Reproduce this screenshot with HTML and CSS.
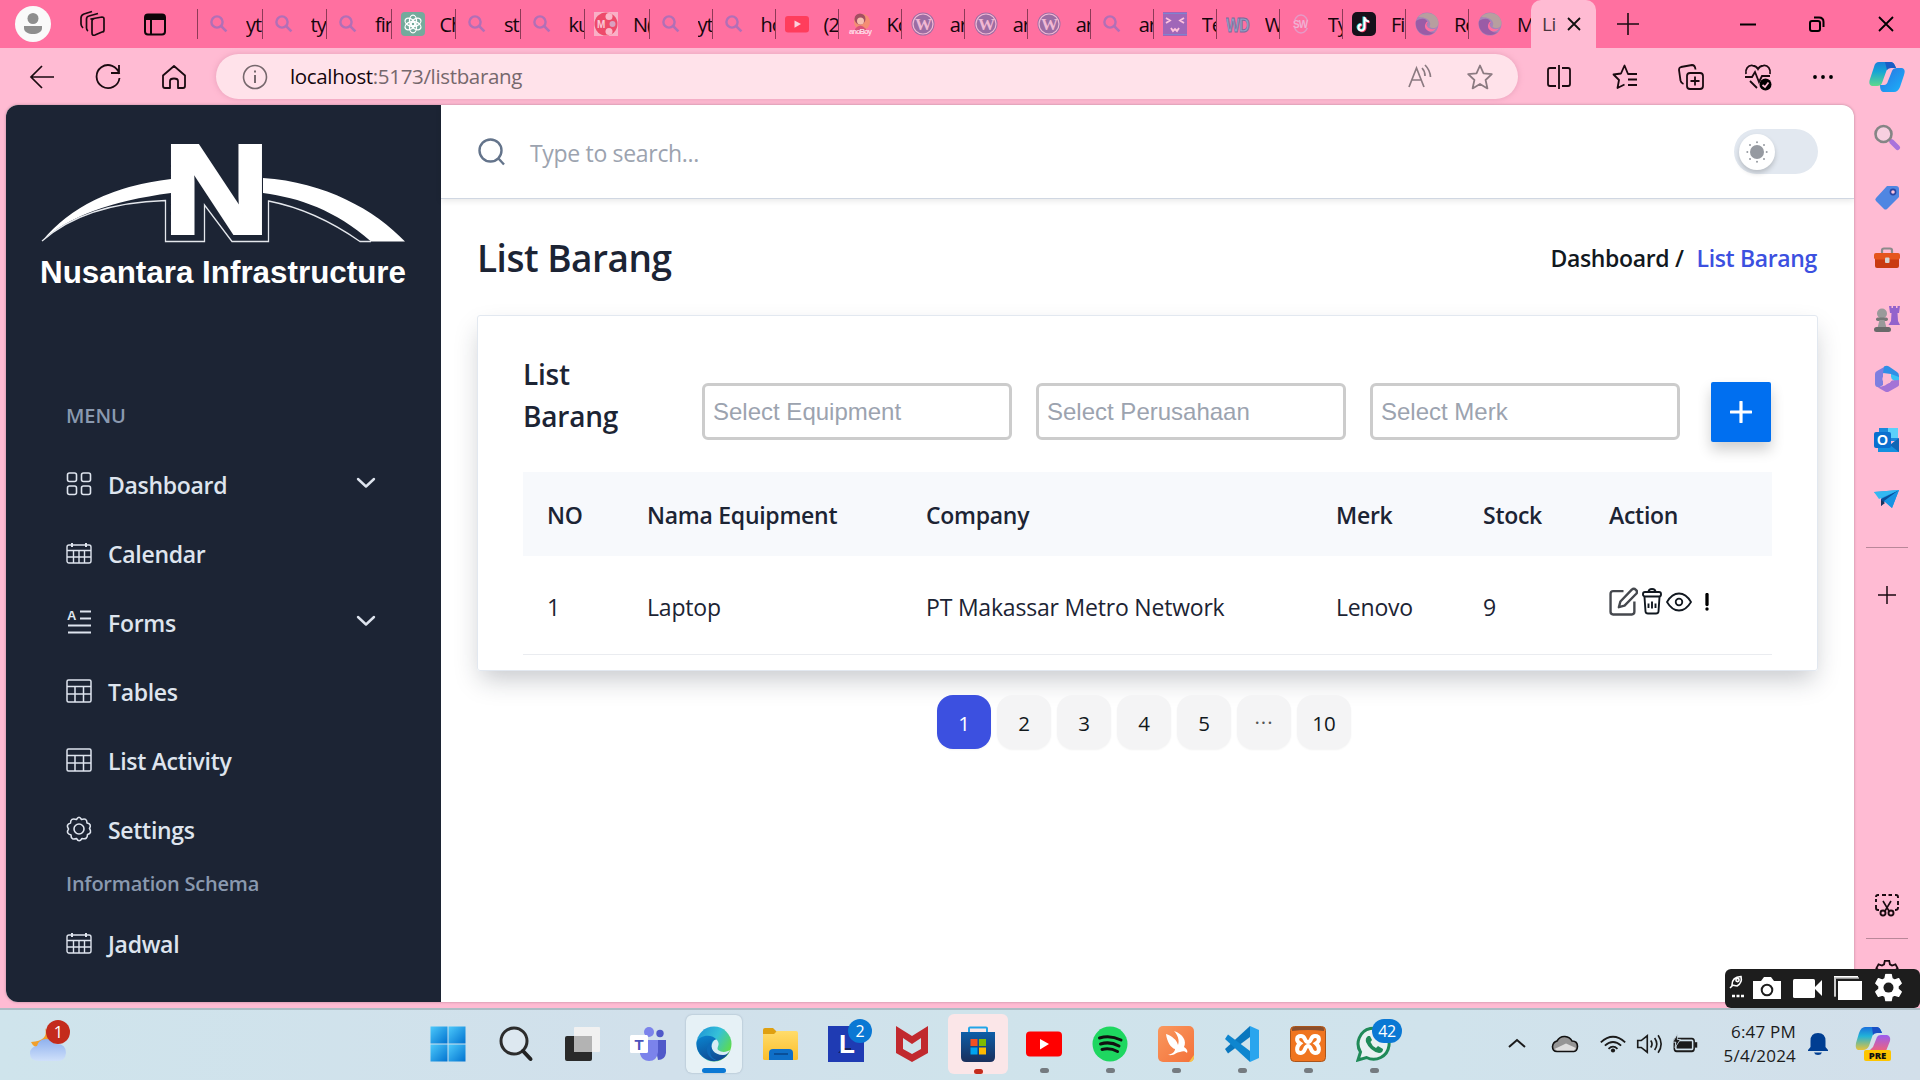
FILE: index.html
```html
<!DOCTYPE html>
<html lang="en">
<head>
<meta charset="utf-8">
<title>List Barang</title>
<link rel="stylesheet" href="styles.css">
</head>
<body>
<svg class="defs" width="0" height="0">
  <defs>
    <linearGradient id="gEdge" x1="0" y1="0" x2="1" y2="0.6"><stop offset="0" stop-color="#1b8fd6"/><stop offset=".55" stop-color="#35c1d8"/><stop offset="1" stop-color="#5fdc4a"/></linearGradient>
    <linearGradient id="gEdge2" x1="0" y1="0" x2="0.4" y2="1"><stop offset="0" stop-color="#0a85d0"/><stop offset="1" stop-color="#0f4d96"/></linearGradient>
    <linearGradient id="gWin" x1="0" y1="0" x2="1" y2="1"><stop offset="0" stop-color="#4cc9fb"/><stop offset="1" stop-color="#0273d0"/></linearGradient>
    <linearGradient id="gCopA" x1="0" y1="0" x2="0" y2="1"><stop offset="0" stop-color="#1b7fd8"/><stop offset=".4" stop-color="#15a5d5"/><stop offset="1" stop-color="#5fd98c"/></linearGradient>
    <linearGradient id="gCopB" x1="0" y1="0" x2="1" y2="1"><stop offset="0" stop-color="#2b6fe0"/><stop offset="1" stop-color="#19b5fb"/></linearGradient>
    <linearGradient id="gCopC" x1="0" y1="0" x2="0" y2="1"><stop offset="0" stop-color="#1a70dd"/><stop offset=".4" stop-color="#21b3d8"/><stop offset="1" stop-color="#e8c33a"/></linearGradient>
    <linearGradient id="gCopD" x1="0" y1="0" x2="0" y2="1"><stop offset="0" stop-color="#9a5cf0"/><stop offset="1" stop-color="#f0627a"/></linearGradient>
    <linearGradient id="gCloud" x1="0" y1="0" x2="0" y2="1"><stop offset="0" stop-color="#8fb1ee"/><stop offset="1" stop-color="#cfe0fa"/></linearGradient>
    <linearGradient id="gFolder" x1="0" y1="0" x2="0" y2="1"><stop offset="0" stop-color="#ffdc6b"/><stop offset="1" stop-color="#fbbe2b"/></linearGradient>
    <linearGradient id="gStore" x1="0" y1="0" x2="0" y2="1"><stop offset="0" stop-color="#0d5ea8"/><stop offset="1" stop-color="#1a2f5c"/></linearGradient>
    <linearGradient id="gSwift" x1="0" y1="0" x2="1" y2="1"><stop offset="0" stop-color="#f9985e"/><stop offset="1" stop-color="#f4713a"/></linearGradient>
    <symbol id="glass" viewBox="0 0 24 24"><circle cx="10" cy="10" r="5.600" fill="none" stroke="#b26fb6" stroke-width="2.400"/><path d="M14.200 14.200 19.400 19.400" stroke="#b26fb6" stroke-width="2.600"/></symbol>
    <symbol id="wp" viewBox="0 0 24 24"><circle cx="12" cy="12" r="11.500" fill="#9c6da3"/><circle cx="12" cy="12" r="10" fill="none" stroke="#f1b8d3" stroke-width="1.200"/><text x="12" y="18" text-anchor="middle" font-family="Liberation Serif" font-weight="700" font-size="17" fill="#f1b8d3">W</text></symbol>
    <symbol id="edgefade" viewBox="0 0 24 24"><circle cx="12" cy="12" r="11.500" fill="#a783b8"/><path d="M3 5C9-2 23 0 23.500 11 23 17 17 17 14.500 14.500 17 10 13 5 3 5Z" fill="#b79f9f"/><path d="M1 9C8 4 14 8 12 12 10 19 17 22 20 20 12 27-1 21 1 9Z" fill="#9a5ca6"/><path d="M13 10C9 14 15 19 21 16.500 17 22 9 19 10 13 11 10 12 9 13 10Z" fill="#ff70a0"/></symbol>
    <symbol id="edge" viewBox="0 0 36 36"><circle cx="18" cy="18" r="17.500" fill="url(#gEdge)"/><path d="M.6 16C3 9 16 7 21 14 17 13 15 17 16 21 18 28 27 29 33 26 28 36 15 38 7 31 2 27 0 22 .6 16Z" fill="url(#gEdge2)"/><path d="M15 16C11 18 9 24 13 30 16 34 20 35 23 34.800 12 32 14 25 15 16Z" fill="#0d6ab8"/><path d="M21 14C25 19 20 21 22 24 26 27 31 26 34 24 33 27 30 29 27 29 18 29 13 22 17 16 18 14 20 13 21 14Z" fill="#d8ecf5"/></symbol>
    <symbol id="cal" viewBox="0 0 26 24"><g fill="none" stroke="#dee4ee" stroke-width="1.400"><rect x="1" y="4" width="24" height="18" rx="2"/><path d="M1 9.500H25M1 16H25M7.500 9.500V22M13 9.500V22M18.500 9.500V22"/><path d="M6 2V6M20 2V6" stroke-width="2"/></g></symbol>
    <symbol id="tbl" viewBox="0 0 26 24"><g fill="none" stroke="#dee4ee" stroke-width="1.500"><rect x="1" y="1" width="24" height="22" rx="1.500"/><path d="M1 7.500H25M1 15H25M9 7.500V23M17.500 7.500V23"/></g></symbol>
    <symbol id="chev" viewBox="0 0 20 12"><path d="M2 2 10 9.500 18 2" fill="none" stroke="#dee4ee" stroke-width="2.400" stroke-linecap="round" stroke-linejoin="round"/></symbol>
    <symbol id="cog" viewBox="0 0 32 32"><path d="M13.300 1h5.400l.9 4.300 2.600 1.500 4.200-1.400 2.700 4.700-3.300 2.900v3l3.300 2.900-2.700 4.700-4.200-1.400-2.600 1.500-.9 4.300h-5.400l-.9-4.300-2.600-1.500-4.200 1.400-2.700-4.700 3.300-2.900v-3l-3.300-2.900 2.700-4.700 4.200 1.400 2.600-1.500z"/></symbol>
  </defs>
</svg>

<header class="tabbar">
  <div class="tab-tools">
    <svg width="38" height="38" viewBox="0 0 38 38"><circle cx="19" cy="19" r="18" fill="#fafafa"/><circle cx="19" cy="13.500" r="5.500" fill="#8e8e8e"/><path d="M10 21H28V23C28 31 10 31 10 23Z" fill="#8e8e8e"/></svg>
    <svg width="28" height="28" viewBox="0 0 28 28" fill="none" stroke="#1a0a10" stroke-width="1.700" stroke-linejoin="round"><path d="M12 9 23 7Q25 7 25 9V20Q25 22 23 22L16 25Q13 26 13 23V11Q13 9 15 8.600Z"/><path d="M9 21Q7.500 20 7.500 18V9Q7.500 6.500 10 6L19 3.500M4 18Q2 16 2 14V8Q2 5 5 4L13 1.500"/></svg>
    <svg width="24" height="24" viewBox="0 0 24 24"><rect x="2" y="2.500" width="20" height="20" rx="3" fill="none" stroke="#0d0508" stroke-width="2"/><path d="M2 8V5Q2 2 5 2H19Q22 2 22 5V8Z" fill="#0d0508"/><path d="M8 8V22" stroke="#0d0508" stroke-width="2"/></svg>
  </div>
  <div class="tabs">
    <div class="tab"><svg class="fav"><use href="#glass"/></svg><span>yt</span></div>
    <div class="tab"><svg class="fav"><use href="#glass"/></svg><span>ty</span></div>
    <div class="tab"><svg class="fav"><use href="#glass"/></svg><span>fir</span></div>
    <div class="tab"><svg class="fav" viewBox="0 0 24 24"><rect width="24" height="24" rx="4" fill="#74aa9c"/><g fill="none" stroke="#fff" stroke-width="1.300"><ellipse cx="12" cy="8.600" rx="3.500" ry="5.400"/><ellipse cx="12" cy="8.600" rx="3.500" ry="5.400" transform="rotate(60 12 12)"/><ellipse cx="12" cy="8.600" rx="3.500" ry="5.400" transform="rotate(120 12 12)"/><ellipse cx="12" cy="8.600" rx="3.500" ry="5.400" transform="rotate(180 12 12)"/><ellipse cx="12" cy="8.600" rx="3.500" ry="5.400" transform="rotate(240 12 12)"/><ellipse cx="12" cy="8.600" rx="3.500" ry="5.400" transform="rotate(300 12 12)"/></g></svg><span>Ch</span></div>
    <div class="tab"><svg class="fav"><use href="#glass"/></svg><span>st</span></div>
    <div class="tab"><svg class="fav"><use href="#glass"/></svg><span>ku</span></div>
    <div class="tab"><svg class="fav" viewBox="0 0 24 24"><rect width="24" height="24" fill="#f9b0c6"/><circle cx="12" cy="12" r="11.500" fill="#ee4a6a"/><circle cx="15" cy="4.500" r="3.500" fill="#fbb7c9"/><circle cx="15" cy="19.500" r="3.500" fill="#fbb7c9"/><circle cx="18.500" cy="12" r="3" fill="#d9a0c0"/><text x="3" y="16" font-family="Liberation Sans" font-weight="700" font-size="10" fill="#fbc9d6">M</text></svg><span>N(</span></div>
    <div class="tab"><svg class="fav"><use href="#glass"/></svg><span>yt</span></div>
    <div class="tab"><svg class="fav"><use href="#glass"/></svg><span>ho</span></div>
    <div class="tab"><svg class="fav" viewBox="0 0 24 24"><rect y="4" width="24" height="16.500" rx="3" fill="#ff3d5c"/><path d="M9.500 8.500 16 12 9.500 15.700Z" fill="#fbd0dc"/></svg><span>(2</span></div>
    <div class="tab"><svg class="fav" viewBox="0 0 24 24"><circle cx="14" cy="10" r="8" fill="#f58e72"/><circle cx="12" cy="7" r="5.500" fill="#a34f62"/><circle cx="12.500" cy="9" r="3.500" fill="#f7c0b0"/><path d="M7 17Q12 10 18 17V20H7Z" fill="#d9537a"/><text x="1" y="21.500" textLength="22" lengthAdjust="spacingAndGlyphs" font-family="Liberation Sans" font-weight="700" font-size="7" fill="#ffd7e4">anoBoy</text></svg><span>Ko</span></div>
    <div class="tab"><svg class="fav"><use href="#wp"/></svg><span>ar</span></div>
    <div class="tab"><svg class="fav"><use href="#wp"/></svg><span>ar</span></div>
    <div class="tab"><svg class="fav"><use href="#wp"/></svg><span>ar</span></div>
    <div class="tab"><svg class="fav"><use href="#glass"/></svg><span>ar</span></div>
    <div class="tab"><svg class="fav" viewBox="0 0 24 24"><rect width="24" height="24" fill="#a066b8"/><path d="M0 1.500H24M0 22.500H24" stroke="#7f84cf" stroke-width="1"/><path d="M3 6 7 8.500 3 11M21 6 17 8.500 21 11M8 16 10 19 12 17 14 19 16 16" fill="none" stroke="#ffc1dc" stroke-width="1.800"/></svg><span>Te</span></div>
    <div class="tab"><svg class="fav" viewBox="0 0 24 24"><text x="0" y="19.500" textLength="23" lengthAdjust="spacingAndGlyphs" font-family="Liberation Sans" font-weight="700" font-size="21" fill="#8fa3c7" stroke="#7a6a9b" stroke-width=".9">WD</text></svg><span>W</span></div>
    <div class="tab"><svg class="fav" viewBox="0 0 24 24"><ellipse cx="12" cy="12" rx="7" ry="9" fill="none" stroke="#e59ac6" stroke-width="1.500"/><rect x="3" y="8" width="18" height="8" fill="#ff70a0"/><text x="4" y="16" font-family="Liberation Sans" font-weight="700" font-size="10" fill="#f1b0d3">SW</text></svg><span>Ty</span></div>
    <div class="tab"><svg class="fav" viewBox="0 0 24 24"><rect width="24" height="24" rx="5" fill="#16101a"/><g fill="none" stroke-width="2.400"><path d="M12.500 5V15.500A3 3 0 1 1 9.500 12.500M12.500 5Q13 9 17 9.500" stroke="#ff3b66" transform="translate(.8 .6)"/><path d="M12.500 5V15.500A3 3 0 1 1 9.500 12.500M12.500 5Q13 9 17 9.500" stroke="#35e5e5" transform="translate(-.8 -.4)"/><path d="M12.500 5V15.500A3 3 0 1 1 9.500 12.500M12.500 5Q13 9 17 9.500" stroke="#fff" stroke-width="2"/></g></svg><span>Fi</span></div>
    <div class="tab"><svg class="fav"><use href="#edgefade"/></svg><span>Re</span></div>
    <div class="tab"><svg class="fav"><use href="#edgefade"/></svg><span>M</span></div>
  </div>
  <div class="tab-active"><span>Li</span><svg width="14" height="14" viewBox="0 0 14 14"><path d="M1 1 13 13M13 1 1 13" stroke="#111" stroke-width="1.800"/></svg></div>
  <svg class="newtab" width="22" height="22" viewBox="0 0 22 22"><path d="M11 0V22M0 11H22" stroke="#1a0a10" stroke-width="1.600"/></svg>
  <div class="winctl">
    <svg width="16" height="16" viewBox="0 0 16 16"><path d="M0 8.500H16" stroke="#000" stroke-width="2"/></svg>
    <svg width="16" height="16" viewBox="0 0 16 16" fill="none" stroke="#000" stroke-width="2"><rect x="1" y="5" width="10" height="10" rx="2"/><path d="M5 1.500H10Q14.500 1.500 14.500 6V11"/></svg>
    <svg width="16" height="16" viewBox="0 0 16 16"><path d="M1 1 15 15M15 1 1 15" stroke="#000" stroke-width="1.800"/></svg>
  </div>
</header>

<nav class="toolbar">
  <div class="nav-btns">
    <svg width="26" height="26" viewBox="0 0 26 26" fill="none" stroke="#1a0a10" stroke-width="1.700"><path d="M25 13H2M13 2 2 13 13 24"/></svg>
    <svg width="26" height="26" viewBox="0 0 26 26" fill="none" stroke="#1a0a10" stroke-width="1.800"><path d="M24.300 10A11.500 11.500 0 1 0 24.500 14M24 1V9H16"/></svg>
    <svg width="26" height="26" viewBox="0 0 26 26" fill="none" stroke="#1a0a10" stroke-width="1.800" stroke-linejoin="round"><path d="M2 11.500 13 2 24 11.500V22Q24 24 22 24H17V17Q17 14.500 13 14.500T9 17V24H4Q2 24 2 22Z"/></svg>
  </div>
  <div class="address">
    <svg width="26" height="26" viewBox="0 0 26 26" fill="none" stroke="#76686d" stroke-width="1.600"><circle cx="13" cy="13" r="11.500"/><path d="M13 11V19M13 6.500V8.500" stroke-width="2"/></svg>
    <span class="url"><b>localhost</b>:5173/listbarang</span>
    <svg width="26" height="26" viewBox="0 0 26 26" fill="none" stroke="#8b7a81" stroke-width="1.700"><path d="M2 23 9.500 4 17 23M5 16H14.500M15 4Q18 7 18 12M18 1Q23 6 23.500 13"/></svg>
    <svg width="26" height="26" viewBox="0 0 26 26" fill="none" stroke="#8b7a81" stroke-width="1.800" stroke-linejoin="round"><path d="M13 1.500 16.500 9.300 24.800 10.200 18.600 16 20.400 24.400 13 20 5.600 24.400 7.400 16 1.200 10.200 9.500 9.300Z"/></svg>
  </div>
  <div class="tools">
    <svg width="26" height="26" viewBox="0 0 26 26" fill="none" stroke="#1a0a10" stroke-width="1.800"><path d="M13 1V25M10 4H4Q2 4 2 6V20Q2 22 4 22H10M16 4H22Q24 4 24 6V20Q24 22 22 22H16"/></svg>
    <svg width="26" height="26" viewBox="0 0 26 26" fill="none" stroke="#1a0a10" stroke-width="1.800" stroke-linejoin="round"><path d="M25 10H16L12.500 1.500 9 9.500 1.500 10.500 7 16 5.500 24 12.500 20.500M16 15.500H25M16 21H25"/></svg>
    <svg width="26" height="26" viewBox="0 0 26 26" fill="none" stroke="#1a0a10" stroke-width="1.800"><rect x="9" y="9" width="16" height="16" rx="3"/><path d="M17 12.500V21.500M12.500 17H21.500M5.500 20Q3 19 2.500 16.500L1 6Q1 3.500 3 3L14 1Q17 1 17.500 5.500"/></svg>
    <svg width="28" height="28" viewBox="0 0 28 28" fill="none" stroke="#1a0a10" stroke-width="1.800"><path d="M2 11C1 6 4 2 8.500 2.500 11 2.700 13 4 14 6 15 4 17 2.700 19.500 2.500 24 2 27 6 26 11M1 14H8L11 9 15 19 18 13H26M6 18 13 25"/><circle cx="21.500" cy="21.500" r="6" fill="#000" stroke="none"/><path d="M18.500 22 21 24 24.500 19.500" stroke="#ffbbd3"/></svg>
    <svg width="22" height="26" viewBox="0 0 22 26" fill="#000"><circle cx="3" cy="13" r="1.900"/><circle cx="11" cy="13" r="1.900"/><circle cx="19" cy="13" r="1.900"/></svg>
    <svg width="36" height="32" viewBox="0 0 36 32"><path d="M10 1H22Q25 1 27 7L22 7Q18 7 17 11L13 22Q12 25 8 25H3Q-1 24 1 18L5 6Q6 1 10 1Z" fill="url(#gCopA)"/><path d="M28 7H33Q37 8 35 14L31 26Q29 31 25 31H14Q11 30 11 24L15 24Q18 24 19 20L23 10Q24 7 28 7Z" fill="url(#gCopB)"/><path d="M16 1H22Q25 1 27 7L22 7Q19 7 18 9Z" fill="#1b5cc4"/></svg>
  </div>
</nav>

<div class="stage">
  <main class="page">
    <aside class="sidebar">
      <svg class="logo" width="366" height="150" viewBox="0 0 366 150">
        <g transform="translate(-41 -142)" fill="#fff">
          <path d="M42 241Q85 189 171 179V193Q80 205 42 241Z"/>
          <path d="M263 178C325 182 375 210 405 241.500H371C335 210 300 198 263 193Z"/>
          <path d="M42 241Q85 203 165.500 200.500V241.500H204.500V205L232 241.500H268.500V201Q315 210 360 241.500H371" fill="none" stroke="#e4e7ec" stroke-width="1.300"/>
          <text transform="translate(163.500 232.500) scale(1.165 1)" font-family="Liberation Sans" font-weight="700" font-size="126" stroke="#fff" stroke-width="4">N</text>
          <text x="40" y="282.500" textLength="366" lengthAdjust="spacingAndGlyphs" font-family="Liberation Sans" font-weight="700" font-size="31.500">Nusantara Infrastructure</text>
        </g>
      </svg>
      <h3 class="group">MENU</h3>
      <ul class="menu">
        <li><svg class="mi" viewBox="0 0 26 24"><g fill="none" stroke="#dee4ee" stroke-width="1.600"><rect x="1.500" y="1" width="9" height="8.500" rx="2"/><rect x="15.500" y="1" width="9" height="8.500" rx="2"/><rect x="1.500" y="14" width="9" height="8.500" rx="2"/><rect x="15.500" y="14" width="9" height="8.500" rx="2"/></g></svg><span>Dashboard</span><svg class="chev"><use href="#chev"/></svg></li>
        <li><svg class="mi"><use href="#cal"/></svg><span>Calendar</span></li>
        <li><svg class="mi" viewBox="0 0 26 24"><text x="1" y="10" font-family="Liberation Sans" font-weight="700" font-size="13" fill="#dee4ee">A</text><path d="M14 1.500H25M14 8.500H25M2 15.500H25M2 22.500H25" stroke="#dee4ee" stroke-width="2"/></svg><span>Forms</span><svg class="chev"><use href="#chev"/></svg></li>
        <li><svg class="mi"><use href="#tbl"/></svg><span>Tables</span></li>
        <li><svg class="mi"><use href="#tbl"/></svg><span>List Activity</span></li>
        <li><svg class="mi" viewBox="0 0 26 26"><g fill="none" stroke="#dee4ee" stroke-width="1.600"><circle cx="13" cy="13" r="5"/><path d="M10.500 3.500Q13-1 15.500 3.500 21 1.500 21 7 26 8 23.500 12.500 26.500 17 21.500 18.500 21.500 24 16 22.500 13 27 10.500 22.500 5 24.500 5 19-.5 17.500 2.500 13-.5 8.500 4.500 7 4.500 1.500 10.500 3.500Z" stroke-linejoin="round"/></g></svg><span>Settings</span></li>
      </ul>
      <h3 class="group info">Information Schema</h3>
      <ul class="menu">
        <li><svg class="mi"><use href="#cal"/></svg><span>Jadwal</span></li>
      </ul>
    </aside>
    <section class="content">
      <div class="topbar">
        <svg width="28" height="28" viewBox="0 0 28 28" fill="none" stroke="#64748b" stroke-width="2.400"><circle cx="12.500" cy="12.500" r="11"/><path d="M20 20 26 26.500"/></svg>
        <span class="search">Type to search...</span>
        <div class="toggle"><div class="knob"><svg width="22" height="22" viewBox="0 0 22 22" fill="#969aa1"><circle cx="11" cy="11" r="7"/><g><circle cx="11" cy="1.300" r="1"/><circle cx="11" cy="20.700" r="1"/><circle cx="1.300" cy="11" r="1"/><circle cx="20.700" cy="11" r="1"/><circle cx="4" cy="4" r="1"/><circle cx="18" cy="4" r="1"/><circle cx="4" cy="18" r="1"/><circle cx="18" cy="18" r="1"/></g></svg></div></div>
      </div>
      <div class="body">
        <div class="head">
          <h2>List Barang</h2>
          <div class="crumbs"><span>Dashboard /</span><span class="current">List Barang</span></div>
        </div>
        <div class="card">
          <div class="filters">
            <h4>List<br>Barang</h4>
            <div class="select">Select Equipment</div>
            <div class="select">Select Perusahaan</div>
            <div class="select">Select Merk</div>
            <button class="add"><svg width="22" height="22" viewBox="0 0 22 22"><path d="M11 1V21M1 11H21" stroke="#fff" stroke-width="3.200" stroke-linecap="round"/></svg></button>
          </div>
          <div class="row thead"><span>NO</span><span>Nama Equipment</span><span>Company</span><span>Merk</span><span>Stock</span><span>Action</span></div>
          <div class="row"><span>1</span><span>Laptop</span><span>PT Makassar Metro Network</span><span>Lenovo</span><span>9</span>
            <span class="actions">
              <svg width="29" height="29" viewBox="0 0 28 28" fill="none" stroke="#45484e" stroke-width="2.300" stroke-linejoin="round"><path d="M14 4H4Q1.500 4 1.500 6.500V24Q1.500 26.500 4 26.500H22Q24.500 26.500 24.500 24V14"/><path d="M22 2.500Q24 .8 26 2.700T26.300 6.500L15 18 9.500 19.500 11 14Z"/></svg>
              <svg width="20" height="27" viewBox="0 0 20 27" fill="none" stroke="#111820" stroke-width="1.900"><rect x="1" y="4" width="18" height="4.500" rx="2"/><path d="M6.500 4Q6.500 1 10 1T13.500 4M2.500 9 3.500 23.500Q3.700 25.500 6 25.500H14Q16.300 25.500 16.500 23.500L17.500 9M6.500 15.500V20M10 13.500V20.500M13.500 15.500V20"/></svg>
              <svg width="26" height="20" viewBox="0 0 26 20" fill="none" stroke="#111820" stroke-width="1.800"><path d="M1 10Q6 1.500 13 1.500T25 10Q20 18.500 13 18.500T1 10Z"/><circle cx="13" cy="10" r="3.300"/></svg>
              <svg class="bang" width="6" height="18" viewBox="0 0 6 18"><path d="M3 1.500V11.500" stroke="#000" stroke-width="3.300" stroke-linecap="round"/><circle cx="3" cy="16" r="1.700"/></svg>
            </span>
          </div>
        </div>
        <div class="pager"><span class="on">1</span><span>2</span><span>3</span><span>4</span><span>5</span><span class="dots">···</span><span>10</span></div>
      </div>
    </section>
  </main>
  <aside class="rail">
    <svg width="28" height="28" viewBox="0 0 28 28"><path d="M17 17 21 21" stroke="#777" stroke-width="3"/><circle cx="10.500" cy="11" r="8" fill="#f7cfe0" stroke="#858585" stroke-width="2.600"/><path d="M19 19 24.500 24.500" stroke="#a972dc" stroke-width="5" stroke-linecap="round"/></svg>
    <svg width="28" height="28" viewBox="0 0 28 28"><path d="M14 2H23Q26 2 26 5V13L14 25Q12.500 26 11 25L3 17Q1.500 15.500 3 14Z" fill="#4f86e2"/><circle cx="20" cy="8" r="2.600" fill="#ffc4dc" stroke="#2b46a3" stroke-width="1.600"/></svg>
    <svg width="28" height="28" viewBox="0 0 28 28"><path d="M9 9V6.500Q9 4.500 11 4.500H17Q19 4.500 19 6.500V9" fill="none" stroke="#8b8b8b" stroke-width="2.200"/><rect x="2" y="13" width="24" height="11" rx="2" fill="#c93a12"/><rect x="1" y="9" width="26" height="6.500" rx="2" fill="#e5551d"/><rect x="12" y="13.500" width="4.500" height="5.500" rx="1" fill="#d5d5d5"/></svg>
    <svg width="28" height="28" viewBox="0 0 28 28"><path d="M16 1H18.500V3H20V1H23V3H24.500V1H27L26 8H24.500L25 16 27 20H15.500L18 16 18.500 8H17Z" fill="#9363cc"/><circle cx="9" cy="8.500" r="5" fill="#9a9a9a"/><rect x="3" y="12.500" width="12" height="3.600" rx="1.800" fill="#777"/><path d="M6.500 15H11.500L13.500 23H4.500Z" fill="#999"/><rect x="1" y="22" width="17" height="5" rx="2.500" fill="#6a6a6a"/></svg>
    <svg width="28" height="28" viewBox="0 0 28 28"><path d="M13 1 4 6Q2 7 2 9V19Q2 22 6 22.500L10 20V9Z" fill="#7d7fe0"/><path d="M11 1.500Q14 0 16 1.500L24 7Q26 8 26 11V18L18 12.500V9L10 8Z" fill="#2f8fe6"/><path d="M18 9 26 12V19L18 13.500Z" fill="#37c2f5"/><path d="M26 15V20Q26 21 24 22L16 26.500Q14 27.500 12 26.500L5 22.500 12 20.500 19 15.500Z" fill="#a473d6"/><circle cx="14" cy="14" r="4.600" fill="#ffbbd3"/></svg>
    <svg width="28" height="28" viewBox="0 0 28 28"><rect x="6" y="2" width="19" height="13" fill="#1b88dc"/><rect x="15" y="2" width="10" height="10" fill="#5bd0fa"/><path d="M5 13 17 19 26 12V26H5Z" fill="#1490df"/><path d="M17 19 26 12V26Z" fill="#1066b5"/><rect x="1" y="6" width="17" height="16" rx="2" fill="#0a6fcf"/><text x="9.500" y="19" text-anchor="middle" font-family="Liberation Sans" font-weight="700" font-size="14" fill="#fff">O</text></svg>
    <svg width="28" height="28" viewBox="0 0 28 28"><path d="M1 6 26 4 19 22Z" fill="#1c9be6"/><path d="M26 4 8 13 8 20 11 16Z" fill="#0b4f9a"/><path d="M1 6 26 4 6 13Z" fill="#33b8f2"/><path d="M8 14 8 20 12 17Z" fill="#17335f"/><path d="M11 15 26 4 19 22Z" fill="#1793e3"/></svg>
    <i class="sep"></i>
    <svg class="plus" width="18" height="18" viewBox="0 0 18 18"><path d="M9 0V18M0 9H18" stroke="#1a0a10" stroke-width="1.500"/></svg>
    <svg class="snip" width="26" height="24" viewBox="0 0 26 24" fill="none" stroke="#1a0a10" stroke-width="1.900"><path d="M5 17H4Q2 17 2 15V12M2 9V6M2 4Q2 2 4 2H5M8 2H12M14.500 2H18M21 2H22Q24 2 24 4V5M24 8V12M24 14V15Q24 17 21 17"/><path d="M9 8 15 18M17 8 11 18" stroke-width="1.600"/><circle cx="9" cy="20" r="2.500"/><circle cx="17" cy="20" r="2.500"/></svg>
    <i class="sep low"></i>
    <svg width="26" height="26" viewBox="0 0 32 32" fill="none" stroke="#1a0a10" stroke-width="2.200"><use href="#cog"/></svg>
  </aside>
  <div class="recorder">
    <svg width="195" height="39" viewBox="0 0 195 39"><g fill="none" stroke="#fff" stroke-width="1.600"><path d="M7 16Q7 8 16 7.500 17.500 14 12 17L7 16Z"/><circle cx="12.500" cy="11" r="1.600"/><path d="M5 19 8 16"/></g><path d="M7 27H19" stroke="#fff" stroke-width="2.400" stroke-dasharray="3 1.500"/><path d="M28 12H36L39 8H46L49 12H56V30H28Z" fill="#fff"/><circle cx="42" cy="21" r="5.300" fill="none" stroke="#1d1d1d" stroke-width="2"/><rect x="68" y="10" width="22" height="19" rx="1.500" fill="#fff"/><path d="M89 19 97 11V27Z" fill="#fff"/><path d="M109 7H133V9H111V27H109Z" fill="#fff"/><rect x="113" y="12" width="24" height="19" fill="#fff"/><path d="M110 28V9H134" fill="none" stroke="#bbb" stroke-width="1.500"/><use href="#cog" x="148" y="4.500" width="31" height="31" fill="#fff" stroke="#fff" stroke-width="1.500" stroke-linejoin="round"/><circle cx="163.500" cy="18.600" r="5" fill="#1d1d1d"/></svg>
  </div>
</div>

<footer class="taskbar">
  <div class="weather"><svg width="52" height="48" viewBox="0 0 52 48"><path d="M20 9Q24 22 6 23 10 31 18 28 28 22 20 9Z" fill="#f2a02a"/><path d="M14 42Q5 42 5 34.500 5 28 12 27 14 20 21 20 28 20 30 25 41 24 41 34 40 42 33 42Z" fill="url(#gCloud)"/><circle cx="33" cy="13" r="12" fill="#c42b1c"/><text x="33.500" y="19" text-anchor="middle" font-family="Open Sans" font-size="16.500" fill="#fff">1</text></svg></div>
  <div class="apps">
    <div class="start"><svg viewBox="0 0 36 36"><g fill="url(#gWin)"><rect x=".5" y=".5" width="17" height="17"/><rect x="18.500" y=".5" width="17" height="17"/><rect x=".5" y="18.500" width="17" height="17"/><rect x="18.500" y="18.500" width="17" height="17"/></g></svg></div>
    <div><svg viewBox="0 0 36 36"><circle cx="16" cy="15" r="13" fill="#dde8f0" stroke="#2c2c2c" stroke-width="3"/><path d="M25 25 32.500 33" stroke="#222" stroke-width="4" stroke-linecap="round"/></svg></div>
    <div><svg viewBox="0 0 36 36"><rect x="1" y="10" width="27" height="25" rx="2" fill="#2a2a2a"/><rect x="10" y="1" width="26" height="25" rx="1" fill="#f1f1f1"/><path d="M10 10H28V26H10Z" fill="#b3b3b3"/></svg></div>
    <div><svg viewBox="0 0 36 36"><circle cx="19" cy="6" r="5" fill="#7b83eb"/><circle cx="30" cy="7.500" r="3.700" fill="#5059c9"/><path d="M24 14H36V27Q35 34 28 34Z" fill="#5059c9"/><path d="M11 14H28V26Q27 35 19 35 12 35 10 28Z" fill="#7b83eb"/><rect x="0" y="9" width="18" height="18" rx="1.500" fill="#fff"/><text x="9" y="23.500" text-anchor="middle" font-family="Liberation Sans" font-weight="700" font-size="15" fill="#4b53bc">T</text></svg></div>
    <div class="sel"><svg><use href="#edge"/></svg><i></i></div>
    <div><svg viewBox="0 0 36 36"><path d="M1 4Q1 2 3 2H11L15 6V12H1Z" fill="#dfa011"/><path d="M1 8H12L15 5H34Q36 5 36 7V33Q36 34 34 34H3Q1 34 1 33Z" fill="url(#gFolder)"/><path d="M7 34V27Q7 23 11 23H27Q31 23 31 27V34Z" fill="#0f6fc8"/><path d="M12 28H26" stroke="#0a4c93" stroke-width="1.800"/></svg></div>
    <div><svg viewBox="0 0 36 36"><rect width="36" height="36" fill="#1f3bb3"/><path d="M10 27 14 22H23V27Z" fill="#16215e"/><text x="11" y="26.500" font-family="Liberation Sans" font-weight="700" font-size="26" fill="#fff">L</text></svg><b class="badge">2</b></div>
    <div><svg viewBox="0 0 36 36"><path d="M2 0 18 10 34 0V27L18 36 2 27ZM9 12V23L18 28 27 23V12L18 18Z" fill="#c1292e" fill-rule="evenodd"/></svg></div>
    <div class="warn"><svg viewBox="0 0 36 36"><path d="M9 7V2.500Q9 1.500 10 1.500H26Q27 1.500 27 2.500V7" fill="none" stroke="#22a5e8" stroke-width="2"/><path d="M1 6H35V31Q35 36 30 36H6Q1 36 1 31Z" fill="url(#gStore)"/><path d="M10.500 13H17.500V20H10.500Z" fill="#f25022"/><path d="M19 13H26V20H19Z" fill="#7fba00"/><path d="M10.500 21.500H17.500V28.500H10.500Z" fill="#00a4ef"/><path d="M19 21.500H26V28.500H19Z" fill="#ffb900"/></svg><i></i></div>
    <div><svg viewBox="0 0 36 36"><rect y="5.500" width="36" height="25" rx="4" fill="#f00"/><path d="M14 13 23 18 14 23.500Z" fill="#fff"/></svg><i></i></div>
    <div><svg viewBox="0 0 36 36"><circle cx="18" cy="18" r="17.500" fill="#1ed760"/><path d="M7.500 12Q18 8.500 29 14M8.500 18Q18 15 27 20M10 23.500Q18 21.500 25.500 25.500" fill="none" stroke="#111" stroke-width="3" stroke-linecap="round"/></svg><i></i></div>
    <div><svg viewBox="0 0 36 36"><rect width="36" height="36" rx="5" fill="url(#gSwift)"/><path d="M36 29V31Q36 36 31 36Z" fill="#f8c64a"/><path d="M8 8C14 10 19 14 20 19 22 14 19 8 16 5 25 8 29 15 26 21 29 23 30 25 29 27 27 25 25 25 22 26 18 26 17 30 10 29 14 28 17 26 17 23 13 22 9 16 8 8Z" fill="#fff"/></svg><i></i></div>
    <div><svg viewBox="0 0 36 36"><path d="M26 0 35 4V32L26 36Z" fill="#2aa5ee"/><path d="M26 0 1 23 4 27.500 26 11Z" fill="#0a77be"/><path d="M26 36 1 13 4 8.500 26 25Z" fill="#0e86cf"/></svg><i></i></div>
    <div><svg viewBox="0 0 36 36"><rect x=".5" y=".5" width="35" height="35" rx="4" fill="#f07520" stroke="#a9551c"/><path d="M2 5Q18 3 34 5V3Q34 1 32 1H4Q2 1 2 3Z" fill="#8b4f2c"/><path d="M11 10C6 10 6 15 10 17.500 6 21 6 27 11 27 16 27 14 20 18 20 22 20 20 27 25 27 30 27 30 21 26 17.500 30 15 30 10 25 10 20 10 22 16 18 16 14 16 16 10 11 10Z" fill="none" stroke="#fff" stroke-width="4"/></svg><i></i></div>
    <div><svg viewBox="0 0 36 36"><path d="M2 34 4.500 26A15.500 15.500 0 1 1 10.500 31.500Z" fill="#e8f1f2" stroke="#1f8a58" stroke-width="3"/><path d="M12 10Q9 12 10 16 14 25 23 27 27 27 27 23L22 20 20 22Q16 20 14.500 16L16 14 14 10Z" fill="#1f8a58"/></svg><b class="badge wide">42</b><i></i></div>
  </div>
  <div class="tray">
    <svg width="22" height="20" viewBox="0 0 22 20"><path d="M3 13 11 6 19 13" fill="none" stroke="#1b1b1b" stroke-width="2"/></svg>
    <svg width="34" height="20" viewBox="0 0 34 20"><path d="M9 17.500Q4.500 17.500 4.500 12.500 5 8 9 7 12 2 17 2.500 22 3 24 7 29.500 7 29.500 12.500 29 17.500 26 17.500Z" fill="#959595" stroke="#111" stroke-width="1.600"/><path d="M6.500 15 18 9.500 28 14 26 16.500H9Z" fill="#ddd"/></svg>
    <svg width="26" height="20" viewBox="0 0 32 22" fill="none" stroke="#1b1b1b" stroke-width="2.200"><path d="M1 9Q16-5 31 9M6 13Q16 4 26 13M10.500 17Q16 11.500 21.500 17"/><circle cx="16" cy="19" r="2.600" fill="#1b1b1b" stroke="none"/></svg>
    <svg width="26" height="20" viewBox="0 0 30 22" fill="none" stroke="#1b1b1b" stroke-width="1.900"><path d="M2 7H6L13 1.500V20.500L6 15H2Z"/><path d="M17 7Q20 11 17 15M21.500 4Q26.500 11 21.500 18M25.500 1Q32.500 11 25.500 21"/></svg>
    <svg width="26" height="20" viewBox="0 0 34 22" preserveAspectRatio="none"><rect x="3" y="5" width="26" height="14" rx="3" fill="none" stroke="#1b1b1b" stroke-width="2"/><rect x="6" y="8" width="20" height="8" fill="#1b1b1b"/><path d="M30 9H33V15H30Z" fill="#1b1b1b"/><path d="M7 0 1 9H5L4 15 11 6H7Z" fill="#1b1b1b" stroke="#d2e0ea" stroke-width="1"/></svg>
    <div class="clock"><span>6:47 PM</span><span>5/4/2024</span></div>
    <svg class="bell" width="20" height="24" viewBox="0 0 20 24"><path d="M10 1Q17.500 1 17.500 9V15L20 18V19H0V18L2.500 15V9Q2.500 1 10 1Z" fill="#003e92"/><path d="M6 20.500H14Q13 23 10 23T6 20.500Z" fill="#003e92"/></svg>
    <svg width="36" height="36" viewBox="0 0 36 36"><path d="M10 1H22Q25 1 27 7H22Q18 7 17 11L14 20Q12 24 8 24H3Q0 23 1 17L4 7Q6 1 10 1Z" fill="url(#gCopC)"/><path d="M26 9H32Q36 10 35 15L31 25H14L18 21 22 11Q23 9 26 9Z" fill="url(#gCopD)"/><path d="M17 1H22Q25 1 27 7H22Q19 7 18 9Z" fill="#1a4fc4"/><rect x="9" y="24" width="27" height="11" rx="2" fill="#fdc500"/><text x="22.500" y="33" text-anchor="middle" font-family="Open Sans" font-weight="800" font-size="9.500" fill="#111">PRE</text></svg>
  </div>
</footer>
</body>
</html>
```
FILE: styles.css
```css
* { box-sizing: border-box; }
html, body { margin: 0; height: 100%; }
body {
  display: flex;
  flex-direction: column;
  width: 1920px;
  height: 1080px;
  overflow: hidden;
  font-family: "Open Sans", "Noto Sans", sans-serif;
  color: #1c2434;
  background: #ffbbd3;
}
svg { display: block; flex: none; }
.defs { position: absolute; }
h2, h3, h4, ul { margin: 0; padding: 0; font-weight: 600; list-style: none; }

/* browser chrome */
.tabbar { display: flex; align-items: center; height: 48px; flex: none; background: #ff70a0; color: #14060c; }
.tab-tools { display: flex; align-items: center; width: 197px; padding-left: 14px; gap: 27px; }
.tab-tools svg:last-child { margin-left: 9px; }
.tabs { display: grid; grid-template-columns: repeat(7, 64.5px) repeat(14, 1fr); width: 1334px; height: 48px; align-items: center; }
.tab { display: flex; align-items: center; height: 30px; padding-left: 9px; border-left: 1px solid #8e3a57; overflow: hidden; font-size: 20px; letter-spacing: -1px; white-space: nowrap; }
.tab span { margin-left: 15px; width: 16px; overflow: hidden; }
.fav { width: 24px; height: 24px; }
.tab-active { display: flex; align-items: center; align-self: stretch; gap: 11px; width: 65px; padding-left: 11px; background: #ffbbd3; border-radius: 10px 10px 0 0; font-size: 19px; letter-spacing: -.5px; color: #4a353d; }
.newtab { margin-left: 21px; }
.winctl { display: flex; gap: 53px; margin-left: 101px; }

.toolbar { display: flex; align-items: center; height: 57px; flex: none; }
.nav-btns { display: flex; gap: 40px; width: 216px; padding-left: 29px; }
.address { display: flex; align-items: center; width: 1302px; height: 45px; padding: 0 25px 0 26px; border-radius: 23px; background: #ffe2ea; box-shadow: 0 0 6px #e79fb9; font-size: 20.5px; color: #76686d; }
.address .url { flex: 1; margin: -2px 0 0 22px; letter-spacing: -.34px; }
.address b { font-weight: 400; color: #14060c; }
.address svg:last-child { margin-left: 34px; }
.tools { display: flex; align-items: center; gap: 40px; margin-left: 28px; }
.tools svg:last-child { margin-left: -5px; }

.stage { position: relative; display: flex; height: 903px; flex: none; padding-left: 6px; }
.page { display: flex; width: 1848px; height: 897px; border-radius: 12px; overflow: hidden; background: #fff; box-shadow: 0 0 3px #b98799; }

/* app sidebar */
.sidebar { display: flex; flex-direction: column; flex: none; width: 435px; background: #1c2434; color: #dee4ee; }
.logo { margin: 37px 0 0 35px; }
.group { margin: 106px 0 15px 60px; font-size: 20px; line-height: 36px; letter-spacing: -.1px; color: #8a99af; }
.group.info { margin: 3px 0 6px 60px; letter-spacing: -.22px; }
.menu li { display: flex; align-items: center; height: 69px; padding: 0 65px 0 60px; font-size: 23px; font-weight: 600; }
.menu span { margin: 2px auto 0 16px; letter-spacing: -.3px; }
.mi { width: 26px; height: 26px; }
.chev { width: 20px; height: 12px; margin-top: -2px; }

/* app content */
.content { flex: 1; display: flex; flex-direction: column; }
.topbar { display: flex; align-items: center; height: 94px; padding: 0 36px 0 37px; border-bottom: 1px solid #d0d7e2; box-shadow: 0 2px 6px #00000018; }
.search { margin: 2px auto 0 24px; font-size: 23px; color: #9ca3af; letter-spacing: -.32px; }
.toggle { display: flex; align-items: center; width: 84px; height: 45px; padding-left: 5px; border-radius: 23px; background: #e2e8f0; }
.knob { display: flex; align-items: center; justify-content: center; width: 36px; height: 36px; border-radius: 50%; background: #fff; box-shadow: 0 3px 5px #00000030; }
.body { padding: 36px 36px 0; }
.head { display: flex; align-items: center; justify-content: space-between; height: 45px; }
.head h2 { font-size: 37px; line-height: 45px; letter-spacing: -.5px; }
.crumbs { display: flex; gap: 13px; margin-right: 1px; font-size: 23px; font-weight: 600; color: #111820; letter-spacing: -.35px; }
.crumbs .current { color: #3c50e0; }
.card { display: flex; flex-direction: column; height: 356px; margin-top: 35px; padding: 38px 45px 0; border: 1px solid #e2e8f0; border-radius: 3px; box-shadow: 0 12px 24px -4px #1c243440; }
.filters { display: flex; align-items: center; height: 84px; margin-bottom: 34px; }
.filters h4 { width: 179px; margin-top: -2px; font-size: 28px; line-height: 42px; letter-spacing: -.2px; }
.select { display: flex; align-items: center; width: 310px; height: 57px; margin: 31px 24px 0 0; padding-left: 8px; border: 3px solid #ccc; border-radius: 6px; font: 24px "Liberation Sans", sans-serif; color: #9ca3af; }
.add { display: flex; align-items: center; justify-content: center; width: 60px; height: 60px; margin: 31px 0 0 7px; padding: 0; border: 0; border-radius: 2px; background: #006ff0; box-shadow: 0 8px 14px #00000030; }
.row { display: grid; grid-template-columns: 100px 279px 410px 147px 126px 1fr; align-items: center; height: 99px; padding: 3px 0 0 24px; border-bottom: 1px solid #eaecf0; font-size: 23px; letter-spacing: -.2px; }
.thead { height: 84px; padding-top: 2px; border: 0; background: #f7f9fc; font-weight: 600; letter-spacing: -.27px; }
.actions { display: flex; align-items: center; gap: 4px; margin-top: -10px; }
.bang { margin-left: 8px; }
.pager { display: flex; gap: 6px; margin: 24px 0 0 460px; }
.pager span { display: flex; align-items: center; justify-content: center; width: 54px; height: 54px; border-radius: 16px; background: #f4f4f5; box-shadow: 0 1px 2px #0000000d; color: #11181c; font-size: 20.5px; padding-top: 1px; }
.pager .on { background: #3c50e0; color: #fff; }
.pager .dots { color: #555; letter-spacing: 1px; padding: 0; }

/* edge rail */
.rail { display: flex; flex-direction: column; align-items: center; width: 66px; padding-top: 18px; gap: 32.5px; }
.sep { width: 42px; height: 1px; flex: none; background: #b98799; }
.plus { margin-top: 6px; }
.snip { margin-top: 256px; }
.sep.low { margin-top: -11px; }
.rail svg:last-child { margin-top: -12px; }
.recorder { position: absolute; right: 0; bottom: 0; width: 195px; height: 39px; border-radius: 6px; background: #1d1d1d; }

/* taskbar */
.taskbar { display: flex; align-items: center; height: 72px; flex: none; border-top: 2px solid #adbcc5; background: linear-gradient(90deg, #cfe4ec, #d1e0eb 35%, #cfe3eb 50%, #d0e3ec 75%, #d2dfea); }
.weather { width: 415px; padding-left: 25px; margin-top: -5px; }
.apps { display: flex; margin-top: -2px; }
.apps div { position: relative; display: flex; align-items: center; justify-content: center; width: 56px; height: 58px; margin: 0 5px; border-radius: 6px; }
.apps .start { margin-right: 7px; }
.apps svg { width: 36px; height: 36px; }
.apps .sel { background: #e6f1f6; box-shadow: 0 0 2px #9ab; }
.apps .warn { background: #fbe6e8; width: 60px; height: 60px; margin: -1px 3px; }
.apps i { position: absolute; left: 50%; bottom: 0; width: 9px; height: 5px; margin-left: -4px; border-radius: 3px; background: #757b80; }
.apps .sel i { width: 24px; margin-left: -12px; background: #0a78d4; }
.apps .warn i { background: #c42b1c; }
.badge { position: absolute; left: 30px; top: 4px; min-width: 24px; height: 24px; border-radius: 12px; background: #0a78d4; color: #fff; font-size: 16px; font-weight: 400; line-height: 24px; text-align: center; }
.badge.wide { left: 26px; width: 30px; letter-spacing: -.5px; }
.tray { display: flex; align-items: center; margin: -2px 0 0 99px; }
.tray svg:nth-child(2) { margin: 0 18px 0 20px; }
.tray svg:nth-child(4) { margin: 0 10px; }
.clock { display: flex; flex-direction: column; align-items: flex-end; width: 98px; font-size: 17px; line-height: 24px; letter-spacing: .2px; color: #1b1b1b; }
.bell { margin: 0 27px 0 12px; }
```
